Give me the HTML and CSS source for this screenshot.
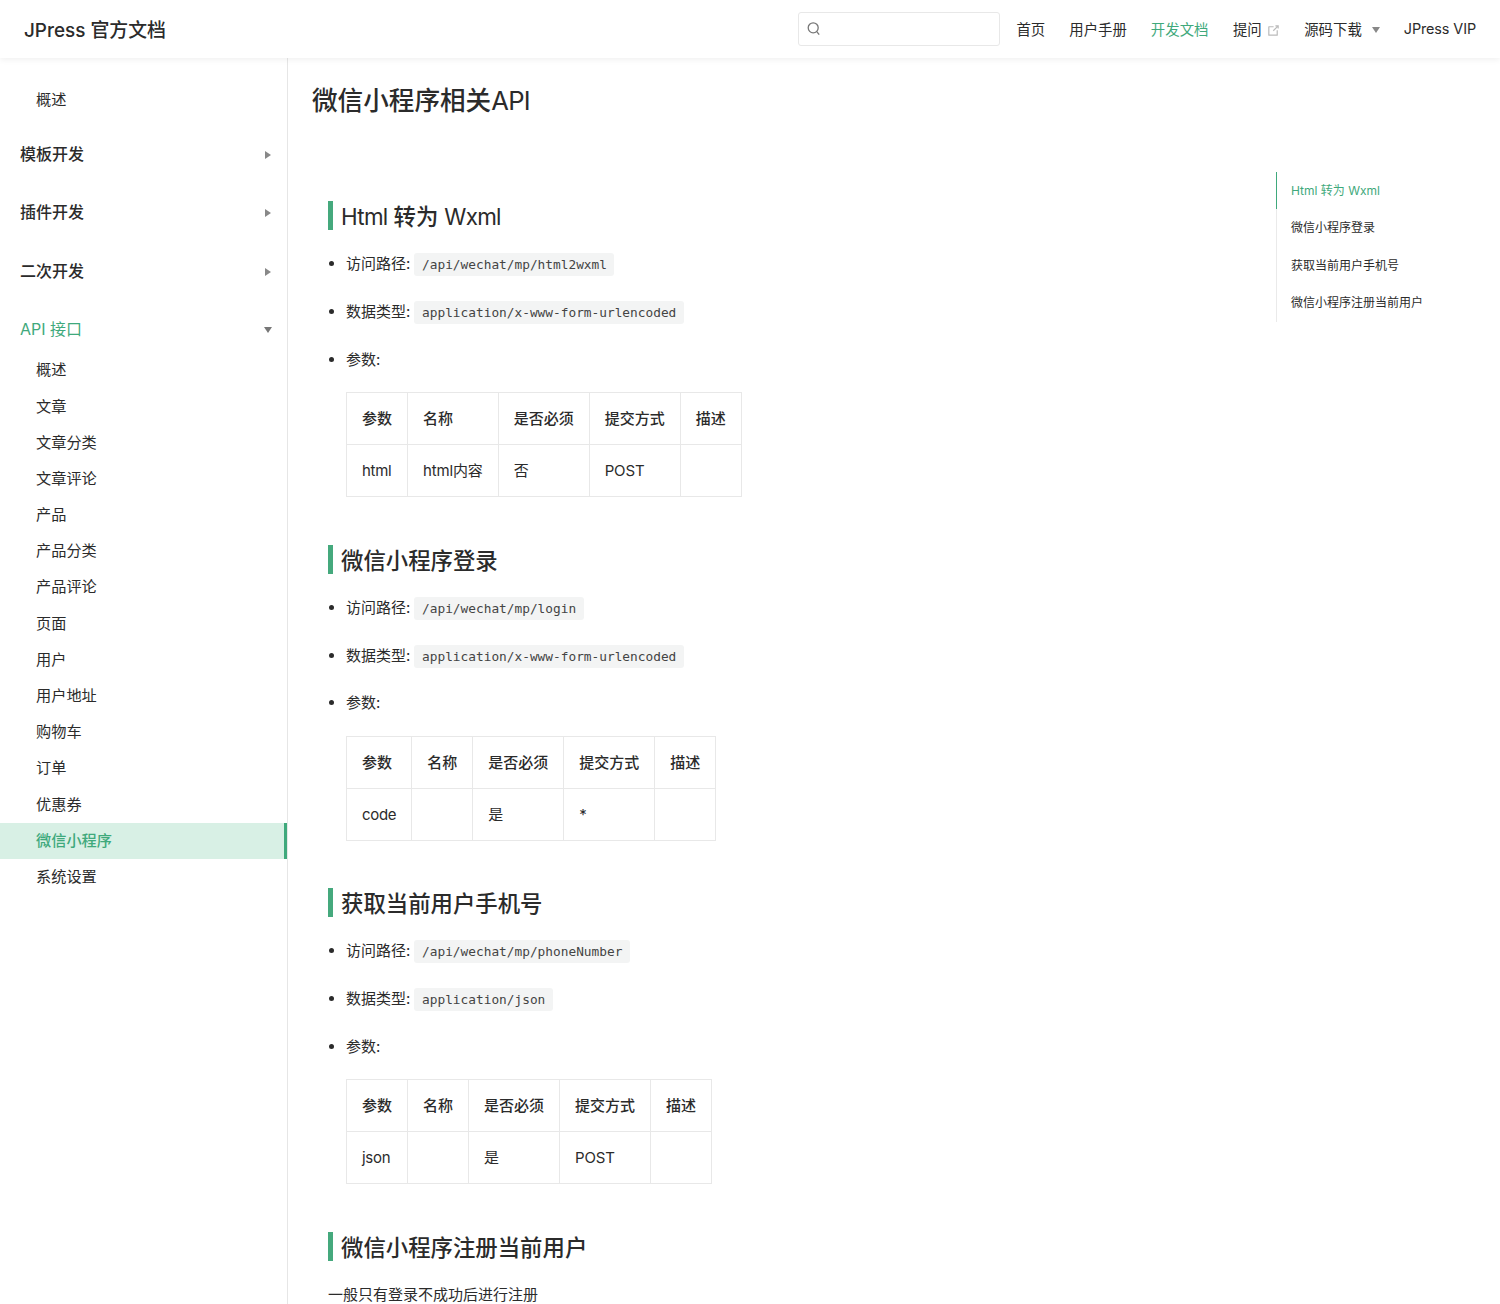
FILE: index.html
```html
<!DOCTYPE html>
<html lang="zh-CN">
<head>
    <meta charset="UTF-8">
    <meta name="viewport" content="width=device-width, initial-scale=1.0">
    <title>微信小程序相关API | JPress 官方文档</title>
    <link rel="stylesheet" href="styles.css">
</head>
<body>

<header class="navbar">
    <a class="logo" href="#">JPress 官方文档</a>
    <div class="nav-right">
        <div class="search">
            <svg class="search-icon" viewBox="0 0 16 16" width="16" height="16">
                <circle cx="7.2" cy="6.8" r="5" fill="none" stroke="currentColor" stroke-width="1.3"/>
                <path d="M10.8 10.6l2.4 3" fill="none" stroke="currentColor" stroke-width="1.3"/>
            </svg>
        </div>
        <nav class="nav-links">
            <a href="#">首页</a>
            <a href="#">用户手册</a>
            <a href="#" class="on">开发文档</a>
            <a href="#" class="ext">提问
                <svg class="ext-icon" viewBox="0 0 100 100" width="15" height="15">
                    <path fill="currentColor" d="M18.8,85.1h56l0,0c2.2,0,4-1.8,4-4v-32h-8v28h-48v-48h28v-8h-32l0,0c-2.2,0-4,1.8-4,4v56C14.8,83.3,16.6,85.1,18.8,85.1z"/>
                    <polygon fill="currentColor" points="45.7,48.7 51.3,54.3 77.2,28.5 77.2,37.2 85.2,37.2 85.2,14.9 62.8,14.9 62.8,22.9 71.5,22.9"/>
                </svg>
            </a>
            <a href="#" class="drop">源码下载<span class="nav-arrow"></span></a>
            <a href="#" class="vip">JPress VIP</a>
        </nav>
    </div>
</header>

<div class="page">
    <aside class="sidebar">
        <a class="side-top" href="#">概述</a>

        <div class="side-group">
            <div class="side-head">模板开发<span class="arrow-right"></span></div>
        </div>
        <div class="side-group">
            <div class="side-head">插件开发<span class="arrow-right"></span></div>
        </div>
        <div class="side-group">
            <div class="side-head">二次开发<span class="arrow-right"></span></div>
        </div>
        <div class="side-group">
            <div class="side-head open">API 接口<span class="arrow-down"></span></div>
            <ul class="side-list">
                <li><a href="#">概述</a></li>
                <li><a href="#">文章</a></li>
                <li><a href="#">文章分类</a></li>
                <li><a href="#">文章评论</a></li>
                <li><a href="#">产品</a></li>
                <li><a href="#">产品分类</a></li>
                <li><a href="#">产品评论</a></li>
                <li><a href="#">页面</a></li>
                <li><a href="#">用户</a></li>
                <li><a href="#">用户地址</a></li>
                <li><a href="#">购物车</a></li>
                <li><a href="#">订单</a></li>
                <li><a href="#">优惠券</a></li>
                <li><a href="#" class="active">微信小程序</a></li>
                <li><a href="#">系统设置</a></li>
            </ul>
        </div>
    </aside>

    <main class="content">
        <article class="doc">
            <h1>微信小程序相关<span class="tight">API</span></h1>

            <section class="api">
                <h2><span class="tight">Html</span> 转为 <span class="tight">Wxml</span></h2>
                <ul>
                    <li>访问路径: <code>/api/wechat/mp/html2wxml</code></li>
                    <li>数据类型: <code>application/x-www-form-urlencoded</code></li>
                    <li>参数:</li>
                </ul>
                <table>
                    <tr><th>参数</th><th>名称</th><th>是否必须</th><th>提交方式</th><th>描述</th></tr>
                    <tr><td>html</td><td>html内容</td><td>否</td><td>POST</td><td></td></tr>
                </table>
            </section>

            <section class="api">
                <h2>微信小程序登录</h2>
                <ul>
                    <li>访问路径: <code>/api/wechat/mp/login</code></li>
                    <li>数据类型: <code>application/x-www-form-urlencoded</code></li>
                    <li>参数:</li>
                </ul>
                <table>
                    <tr><th>参数</th><th>名称</th><th>是否必须</th><th>提交方式</th><th>描述</th></tr>
                    <tr><td>code</td><td></td><td>是</td><td>*</td><td></td></tr>
                </table>
            </section>

            <section class="api">
                <h2>获取当前用户手机号</h2>
                <ul>
                    <li>访问路径: <code>/api/wechat/mp/phoneNumber</code></li>
                    <li>数据类型: <code>application/json</code></li>
                    <li>参数:</li>
                </ul>
                <table>
                    <tr><th>参数</th><th>名称</th><th>是否必须</th><th>提交方式</th><th>描述</th></tr>
                    <tr><td>json</td><td></td><td>是</td><td>POST</td><td></td></tr>
                </table>
            </section>

            <section class="api">
                <h2>微信小程序注册当前用户</h2>
                <p>一般只有登录不成功后进行注册</p>
            </section>
        </article>

        <aside class="toc">
            <ul>
                <li><a href="#" class="active">Html 转为 Wxml</a></li>
                <li><a href="#">微信小程序登录</a></li>
                <li><a href="#">获取当前用户手机号</a></li>
                <li><a href="#">微信小程序注册当前用户</a></li>
            </ul>
        </aside>
    </main>
</div>

</body>
</html>
```

FILE: styles.css
```css
* { box-sizing: border-box; }
html, body { margin: 0; height: 1304px; overflow: hidden; }
body { display: flex; flex-direction: column; font-family: Inter, "Noto Sans CJK SC", sans-serif; font-size: 15px; color: #2b2b2b; background: white; }
a { color: inherit; text-decoration: none; }
ul { margin: 0; padding: 0; }

.navbar { display: flex; justify-content: space-between; align-items: center; flex: none; height: 58px; padding: 0 24px; background: white; box-shadow: 0 2px 6px rgba(0, 0, 0, .06); position: relative; z-index: 2; }
.logo { padding-bottom: 2px; font-size: 18.9px; font-weight: 500; color: #2b2b2b; }
.nav-right { display: flex; align-items: center; }
.search { display: flex; align-items: center; width: 202px; height: 34px; margin-right: 16px; padding-left: 7px; border: 1px solid #e8e8e8; border-radius: 3px; }
.search-icon { color: #777; }
.nav-links { display: flex; align-items: center; gap: 24px; padding-bottom: 2px; font-size: 14.4px; }
.nav-links .on { color: #3fa97c; }
.ext { display: flex; align-items: center; margin-left: .5px; }
.ext-icon { margin: 4px -.5px 0 4px; color: #bbb; }
.drop { display: flex; align-items: center; }
.vip { letter-spacing: -.1px; }
.nav-arrow { width: 0; height: 0; margin: 4px 0 0 10px; border-left: 4px solid transparent; border-right: 4px solid transparent; border-top: 6px solid #888; }

.page { display: flex; flex: 1; min-height: 0; }

.sidebar { flex: none; width: 288px; padding-top: 24px; border-right: 1px solid #e6e6e6; }
.side-top { display: block; height: 36px; margin-bottom: 16px; padding-left: 36px; line-height: 36px; font-size: 15.2px; }
.side-group { margin-bottom: 18.4px; }
.side-head { display: flex; justify-content: space-between; align-items: center; height: 40px; padding: 0 16px 2px 20px; font-size: 16px; font-weight: 500; }
.side-head.open { color: #3fa97c; font-weight: 400; }
.arrow-right { width: 0; height: 0; margin-top: 4px; border-top: 4px solid transparent; border-bottom: 4px solid transparent; border-left: 6px solid #888; }
.arrow-down { width: 0; height: 0; margin: 4px -1px 0 0; border-left: 4px solid transparent; border-right: 4px solid transparent; border-top: 6px solid #777; }
.side-list { margin-top: 3.2px; list-style: none; }
.side-list a { display: block; height: 36.2px; padding-left: 36px; line-height: 36.9px; font-size: 15.2px; }
.side-list a.active { background: #d8f0e5; border-right: 3px solid #3fa97c; color: #3fa97c; font-weight: 500; }

.content { display: flex; flex: 1; min-width: 0; }
.doc { flex: 1; min-width: 0; padding: 25px 0 0 24px; }
h1 { margin: 0 0 34.55px; font-size: 25.6px; line-height: 36px; font-weight: 500; color: #2b2b2b; }
.tight { font-weight: 400; letter-spacing: -.7px; }

.api { margin-left: 16px; padding-top: 47.8px; }
h2 { margin: 0; padding: 2px 0 0 8px; border-left: 5px solid #45a97d; font-size: 22.4px; line-height: 27px; font-weight: 500; color: #2b2b2b; }
.api ul { margin-top: 22px; padding-left: 18px; }
.api li { margin-bottom: 23.7px; line-height: 24px; }
.api p { margin: 22px 0 0; line-height: 24px; }
code { display: inline-block; margin-left: -1px; padding: 0 7.5px 0 8.5px; background: #f3f4f4; border-radius: 3px; font-family: "DejaVu Sans Mono", monospace; font-size: 12.8px; line-height: 23px; color: #444; vertical-align: baseline; }

table { margin: -3.35px 0 0 18px; border-collapse: collapse; }
th, td { height: 52px; padding: 1px 15px 0; border: 1px solid #e8e8e8; text-align: left; line-height: 22px; font-size: 15px; }
th { font-weight: 500; }
td { letter-spacing: -.15px; }
td:first-child { letter-spacing: -.3px; }

.toc { flex: none; width: 224px; margin-top: 114px; font-size: 12px; }
.toc ul { list-style: none; border-left: 1px solid #eaeaea; }
.toc a { display: block; height: 37.4px; margin-left: -1px; padding-left: 14px; border-left: 1px solid transparent; line-height: 37.4px; }
.toc a.active { border-left-color: #3fa97c; color: #3fa97c; }
```
